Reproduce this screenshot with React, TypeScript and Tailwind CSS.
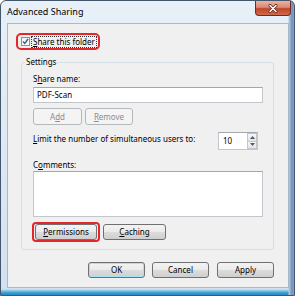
import React from "react";

const btnBase =
  "flex items-center justify-center whitespace-nowrap rounded-[3px] border border-[#707070] bg-[linear-gradient(to_bottom,#f3f3f3_0%,#ebebeb_48%,#dcdcdc_52%,#cfcfcf_100%)] text-[8px] leading-[12px] text-black";

const btnDisabled =
  "flex items-center justify-center whitespace-nowrap rounded-[3px] border border-[#b5b8bb] bg-[#f4f4f4] text-[8px] leading-[12px] text-[#8d8d8d]";

function U({ children }: { children: React.ReactNode }) {
  return <span className="underline decoration-[1px] underline-offset-[1px]">{children}</span>;
}

export default function App() {
  return (
    <div className="relative h-[296px] w-[295px] overflow-hidden rounded-t-[6px] border border-[#43566c] bg-[linear-gradient(to_right,transparent_287px,#b3c9df_288px,#6f90b5_291px,#86a6c8_293px),linear-gradient(to_bottom,transparent_288px,#a8d4ee_289px,#47aedb_291px,#2e8cc4_293px),linear-gradient(to_bottom,#e8f0f8,#d2e1f0)] font-['Noto_Sans','Open_Sans',sans-serif] text-black">
      {/* title bar */}
      <div className="flex h-[22px] items-center whitespace-nowrap pl-[6px] text-[9px] leading-[12px]">
        Advanced Sharing
      </div>
      {/* close button (overlay in frame) */}
      <div className="absolute left-[254px] top-0 flex h-[15px] w-[36px] items-center justify-center rounded-b-[4px] border border-t-0 border-[#6b2c22] bg-[linear-gradient(to_bottom,#eab3a3_0%,#d98a72_45%,#c2432a_55%,#d06a4c_100%)]">
        <svg width="10" height="9" viewBox="0 0 10 9">
          <path d="M2 1.5 L8 7.5 M8 1.5 L2 7.5" stroke="#5a2418" strokeWidth="3" strokeLinecap="round" />
          <path d="M2 1.5 L8 7.5 M8 1.5 L2 7.5" stroke="#ffffff" strokeWidth="1.6" strokeLinecap="round" />
        </svg>
      </div>

      {/* client area */}
      <div className="ml-[6px] h-[265px] w-[282px] border border-[#a9b9ca] bg-[#f0f0f0]">
        {/* share this folder */}
        <div className="ml-[8px] mt-[9px] flex h-[17px] w-[84px] items-center rounded-[5px] border-2 border-[#e2272d]">
          <div className="ml-[3px] flex h-[9px] w-[9px] shrink-0 items-center justify-center border border-[#8b9098] bg-[linear-gradient(to_bottom,#eef1f5,#ffffff)]">
            <svg width="7" height="7" viewBox="0 0 7 7">
              <path d="M1 3.6 L2.8 5.5 L6 1" stroke="#3e5a8f" strokeWidth="1.4" fill="none" />
            </svg>
          </div>
          <div className="ml-[1px] whitespace-nowrap border border-dotted border-[#333] px-[1px] text-[8px] leading-[10px]">
            <U>S</U>hare this folder
          </div>
        </div>

        {/* settings group */}
        <div className="relative ml-[13px] mt-[12px] h-[188px] w-[253px] rounded-[3px] border border-[#d5dfe5] pl-[11px]">
          <div className="absolute left-[3px] top-[-7px] whitespace-nowrap bg-[#f0f0f0] px-[1px] text-[8px] leading-[12px]">
            Settings
          </div>

          <div className="mt-[10px] whitespace-nowrap text-[8px] leading-[12px]">
            S<U>h</U>are name:
          </div>
          <div className="mt-[2px] flex h-[16px] w-[230px] items-center border border-[#c3c7cd] border-t-[#a2a7ae] bg-white pl-[3px] text-[8px] leading-[12px]">
            PDF-Scan
          </div>

          <div className="mt-[5px] flex">
            <div className={`${btnDisabled} h-[17px] w-[49px]`}>
              A<U>d</U>d
            </div>
            <div className={`${btnDisabled} ml-[3px] h-[17px] w-[48px]`}>
              <U>R</U>emove
            </div>
          </div>

          <div className="mt-[7px] flex h-[18px] w-[225px] items-start">
            <div className="mt-[1px] whitespace-nowrap text-[8px] leading-[12px]">
              <U>L</U>imit the number of simultaneous users to:
            </div>
            <div className="ml-auto flex h-[18px] w-[40px] border border-[#c3c7cd] border-t-[#a2a7ae] bg-white">
              <div className="flex flex-1 items-center pl-[4px] text-[8px] leading-[12px]">10</div>
              <div className="flex w-[10px] flex-col">
                <div className="flex flex-1 items-center justify-center border border-[#c2c5c9] bg-[linear-gradient(to_bottom,#f7f7f7,#e4e4e4)]">
                  <svg width="5" height="3" viewBox="0 0 5 3">
                    <path d="M0 3 L2.5 0 L5 3 Z" fill="#4a5a78" />
                  </svg>
                </div>
                <div className="flex flex-1 items-center justify-center border border-t-0 border-[#c2c5c9] bg-[linear-gradient(to_bottom,#f7f7f7,#e4e4e4)]">
                  <svg width="5" height="3" viewBox="0 0 5 3">
                    <path d="M0 0 L2.5 3 L5 0 Z" fill="#4a5a78" />
                  </svg>
                </div>
              </div>
            </div>
          </div>

          <div className="mt-[9px] whitespace-nowrap text-[8px] leading-[12px]">
            C<U>o</U>mments:
          </div>
          <div className="h-[46px] w-[230px] border border-[#c3c7cd] border-t-[#a2a7ae] bg-white" />

          <div className="mt-[5px] flex items-center">
            <div className="ml-[-1px] flex h-[20px] w-[68px] items-center justify-center rounded-[4px] border-2 border-[#e2272d]">
              <div className={`${btnBase} h-[16px] w-[62px]`}>
                <U>P</U>ermissions
              </div>
            </div>
            <div className={`${btnBase} ml-[3px] h-[16px] w-[63px]`}>
              <U>C</U>aching
            </div>
          </div>
        </div>

        {/* bottom buttons */}
        <div className="ml-[80px] mt-[12px] flex">
          <div className={`${btnBase} h-[16px] w-[57px] border-[#3c7fb1] shadow-[inset_0_0_0_1px_#a8e0f8]`}>OK</div>
          <div className={`${btnBase} ml-[7px] h-[16px] w-[57px]`}>Cancel</div>
          <div className={`${btnBase} ml-[8px] h-[16px] w-[57px]`}>Apply</div>
        </div>
      </div>
    </div>
  );
}
